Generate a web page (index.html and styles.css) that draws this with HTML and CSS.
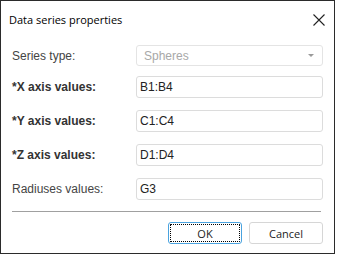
FILE: index.html
```html
<!DOCTYPE html>
<html lang="en">
<head>
  <meta charset="UTF-8">
  <title>Data series properties</title>
  <link rel="stylesheet" href="styles.css">
</head>
<body>
  <div class="dialog">
    <div class="dialog-header">
      <span class="dialog-title">Data series properties</span>
      <svg class="close-icon" width="12" height="12" viewBox="0 0 12 12">
        <path d="M0.5 0.5 L11.5 11.5 M11.5 0.5 L0.5 11.5" stroke="#222" stroke-width="1.1" fill="none"/>
      </svg>
    </div>
    <div class="dialog-content">
      <div class="row row-first">
        <label class="field-label">Series type:</label>
        <div class="field select disabled">
          <span>Spheres</span>
          <span class="arrow"></span>
        </div>
      </div>
      <div class="row">
        <label class="field-label required">*X axis values:</label>
        <div class="field">B1:B4</div>
      </div>
      <div class="row">
        <label class="field-label required">*Y axis values:</label>
        <div class="field">C1:C4</div>
      </div>
      <div class="row">
        <label class="field-label required">*Z axis values:</label>
        <div class="field">D1:D4</div>
      </div>
      <div class="row">
        <label class="field-label">Radiuses values:</label>
        <div class="field">G3</div>
      </div>
    </div>
    <div class="separator"></div>
    <div class="dialog-footer">
      <button class="button button-default"><span class="focus-rect">OK</span></button>
      <button class="button">Cancel</button>
    </div>
  </div>
</body>
</html>
```

FILE: styles.css
```css
body {
  margin: 0;
  background-color: #fff;
  font-family: Tahoma, "Liberation Sans", sans-serif;
}

.dialog {
  width: 333px;
  height: 252px;
  border: 1px solid #2b2b2b;
  background-color: #fff;
  display: flex;
  flex-direction: column;
}

.dialog-header {
  height: 36px;
  display: flex;
  align-items: center;
  justify-content: space-between;
  padding: 0 9px 0 8px;
  box-sizing: border-box;
}

.dialog-title {
  font-family: "Open Sans", sans-serif;
  font-size: 11px;
  color: #000;
  margin-top: 1px;
}

.close-icon {
  margin-top: 2px;
}

.dialog-content {
  padding: 8px 11px 0 11px;
  display: flex;
  flex-direction: column;
  gap: 12px;
}

.row {
  display: flex;
  align-items: center;
  height: 22px;
}

.row-first {
  height: 21px;
  margin-bottom: -2px;
}

.field-label {
  width: 124px;
  font-size: 12px;
  color: #444;
}

.field-label.required {
  font-weight: bold;
  color: #333;
}

.field {
  flex: 1;
  height: 100%;
  box-sizing: border-box;
  border: 1px solid #dcdcdc;
  border-radius: 3px;
  padding: 0 0 0 3px;
  display: flex;
  align-items: center;
  font-size: 12px;
  color: #222;
}

.field.disabled {
  color: #a8a8a8;
  border-color: #e4e4e4;
  padding-left: 7px;
}

.select {
  justify-content: space-between;
}

.arrow {
  width: 0;
  height: 0;
  border-left: 3px solid transparent;
  border-right: 3px solid transparent;
  border-top: 3px solid #9a9a9a;
  margin-right: 8px;
}

.separator {
  height: 1px;
  background-color: #a0a0a0;
  margin: 11px 13px 0 11px;
}

.dialog-footer {
  display: flex;
  justify-content: flex-end;
  gap: 7px;
  padding: 10px 11px 0 0;
}

.button {
  width: 74px;
  height: 22px;
  box-sizing: border-box;
  background-color: #fff;
  border: 1px solid #d6d6d6;
  border-radius: 3px;
  font-family: "Open Sans", sans-serif;
  font-size: 11px;
  color: #222;
  padding: 0;
}

.button-default {
  border-color: #4aa3df;
  padding: 1px;
}

.focus-rect {
  display: flex;
  align-items: center;
  justify-content: center;
  height: 100%;
  box-sizing: border-box;
  border: 1px dotted #000;
  border-radius: 1px;
}
```
